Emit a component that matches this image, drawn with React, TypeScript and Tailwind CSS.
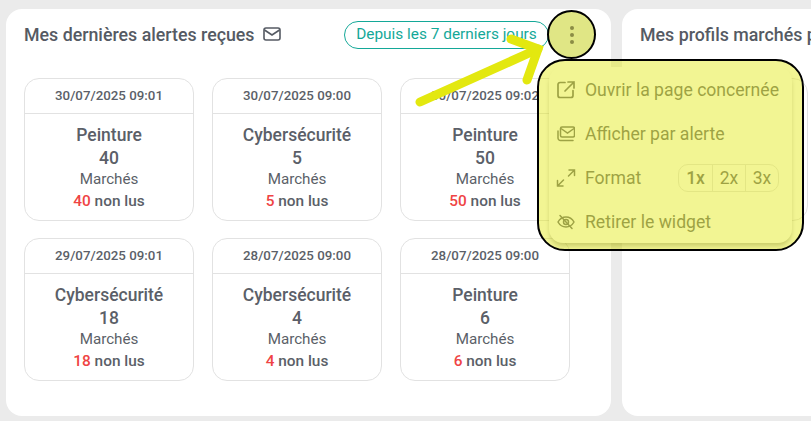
const alerts = [
  { date: '30/07/2025 09:01', name: 'Peinture', count: 40 },
  { date: '30/07/2025 09:00', name: 'Cybersécurité', count: 5 },
  { date: '30/07/2025 09:02', name: 'Peinture', count: 50 },
  { date: '29/07/2025 09:01', name: 'Cybersécurité', count: 18 },
  { date: '28/07/2025 09:00', name: 'Cybersécurité', count: 4 },
  { date: '28/07/2025 09:00', name: 'Peinture', count: 6 },
];

function AlertCard({ date, name, count }: { date: string; name: string; count: number }) {
  return (
    <div className="h-[143px] rounded-[15px] border border-[#e2e2e2] bg-white text-center text-[#5b5f68]">
      <div className="flex h-[35px] items-center justify-center border-b border-[#e2e2e2] text-[13.3px] font-medium">
        {date}
      </div>
      <div className="flex flex-col items-center pt-[9px]">
        <div className="text-[17.5px] font-medium leading-[24px]">{name}</div>
        <div className="text-[17.5px] font-medium leading-[23px]">{count}</div>
        <div className="text-[15.2px] leading-[19px]">Marchés</div>
        <div className="mt-[1px] text-[15.4px] font-medium leading-[22px]">
          <span className="text-[#ef4444]">{count}</span> non lus
        </div>
      </div>
    </div>
  );
}

function MenuRow({ icon, label }: { icon: React.ReactNode; label: string }) {
  return (
    <div className="flex h-[44px] items-center gap-[9px] pl-[7px]">
      <span className="flex w-[20px] justify-center">{icon}</span>
      <span className="text-[17.6px]">{label}</span>
    </div>
  );
}

export default function App() {
  return (
    <div className="relative h-screen w-full overflow-hidden bg-[#ebebeb] font-['Roboto',sans-serif]">
      <div className="flex gap-[11px] pl-[6px] pt-[9px]">
        {/* widget alertes */}
        <div className="h-[407px] w-[605px] shrink-0 rounded-[16px] bg-white px-[18px]">
          <div className="flex h-[50px] items-center pr-[44px]">
            <h2 className="pt-[2px] text-[17.8px] font-medium text-[#555a63]">Mes dernières alertes reçues</h2>
            <svg className="ml-[8px] h-[18px] w-[18px] text-[#555a63]" viewBox="0 0 18 18" fill="none" stroke="currentColor" strokeWidth="1.6">
              <rect x="1" y="3" width="16" height="12" rx="2" />
              <path d="M1.500 5l7.500 5 7.500-5" />
            </svg>
            <span className="ml-auto mt-[2px] flex h-[28px] w-[205px] items-center justify-center rounded-full border border-[#14a898] text-[15.4px] text-[#14a898]">
              Depuis les 7 derniers jours
            </span>
          </div>
          <div className="mt-[19px] grid grid-cols-[170px_170px_170px] gap-x-[18px] gap-y-[17px]">
            {alerts.map((a, i) => (
              <AlertCard key={i} {...a} />
            ))}
          </div>
        </div>

        {/* widget profils */}
        <div className="h-[407px] w-[300px] shrink-0 rounded-[16px] bg-white px-[18px]">
          <div className="flex h-[50px] items-center whitespace-nowrap pt-[2px] text-[17.8px] font-medium text-[#555a63]">
            Mes profils marchés publics
          </div>
          <div className="mt-[19px] h-[143px] w-[168px] rounded-[15px] border border-[#e2e2e2]" />
        </div>
      </div>

      {/* bouton trois points */}
      <div className="absolute left-[547px] top-[10px] flex h-[49px] w-[49px] flex-col items-center justify-center gap-[3px] rounded-full border-2 border-black bg-[#e0e685]">
        <span className="h-[4px] w-[4px] rounded-full bg-[#8a8c45]" />
        <span className="h-[4px] w-[4px] rounded-full bg-[#8a8c45]" />
        <span className="h-[4px] w-[4px] rounded-full bg-[#8a8c45]" />
      </div>

      {/* menu */}
      <div className="absolute left-[549px] top-[67px] h-[176px] w-[243px] rounded-[14px] bg-white pr-[13px] pt-[1px] text-[#666970] shadow-[0_4px_5px_-1px_rgba(0,0,0,0.3)]">
        <MenuRow
          label="Ouvrir la page concernée"
          icon={
            <svg className="h-[20px] w-[20px]" viewBox="0 0 20 20" fill="none" stroke="currentColor" strokeWidth="1.7" strokeLinecap="round">
              <path d="M9 2.500H4a2 2 0 0 0-2 2v11a2 2 0 0 0 2 2h11a2 2 0 0 0 2-2v-5" />
              <path d="M12 2h6v6M18 2l-9 9" />
            </svg>
          }
        />
        <MenuRow
          label="Afficher par alerte"
          icon={
            <svg className="h-[18px] w-[18px]" viewBox="0 0 18 18" fill="none" stroke="currentColor" strokeWidth="1.5">
              <rect x="3.500" y="2" width="14" height="10" rx="1.500" />
              <path d="M4 3.500l6.500 4.500L17 3.500" />
              <path d="M1 6v7a2.500 2.500 0 0 0 2.500 2.500H16" strokeLinecap="round" />
            </svg>
          }
        />
        <div className="flex h-[44px] items-center gap-[9px] pl-[7px]">
          <span className="flex w-[20px] justify-center">
            <svg className="h-[20px] w-[20px]" viewBox="0 0 20 20" fill="none" stroke="currentColor" strokeWidth="1.5" strokeLinecap="round">
              <path d="M13 2h5.500v5.500M18.500 2l-6 6M7 18H1.500v-5.500M1.500 18l6-6" />
            </svg>
          </span>
          <span className="text-[17.6px]">Format</span>
          <div className="ml-auto flex h-[28px] items-center rounded-[10px] border border-[#e4e4e4] text-[17.5px]">
            <span className="w-[33px] text-center font-medium">1x</span>
            <span className="w-[33px] border-l border-[#e4e4e4] text-center">2x</span>
            <span className="w-[33px] border-l border-[#e4e4e4] text-center">3x</span>
          </div>
        </div>
        <MenuRow
          label="Retirer le widget"
          icon={
            <svg className="h-[18px] w-[18px]" viewBox="0 0 18 18" fill="none" stroke="currentColor" strokeWidth="1.5" strokeLinecap="round">
              <path d="M1 9c2-3.500 4.800-5 8-5s6 1.500 8 5c-2 3.500-4.800 5-8 5s-6-1.500-8-5z" />
              <circle cx="9" cy="9" r="2.500" />
              <path d="M3 2.500l12 13" />
            </svg>
          }
        />
      </div>

      {/* surlignage jaune */}
      <div className="pointer-events-none absolute left-[537px] top-[59px] h-[192px] w-[267px] rounded-[28px] border-2 border-black bg-[#e3e80f]/45" />

      {/* fleche */}
      <svg className="pointer-events-none absolute left-0 top-0 h-[421px] w-[811px]" viewBox="0 0 811 421" fill="none">
        <path d="M420 102L538 49" stroke="#e3e80f" strokeWidth="9" strokeLinecap="round" />
        <path d="M511 39L538 49L527 80" stroke="#e3e80f" strokeWidth="9" strokeLinecap="round" strokeLinejoin="miter" />
      </svg>
    </div>
  );
}
